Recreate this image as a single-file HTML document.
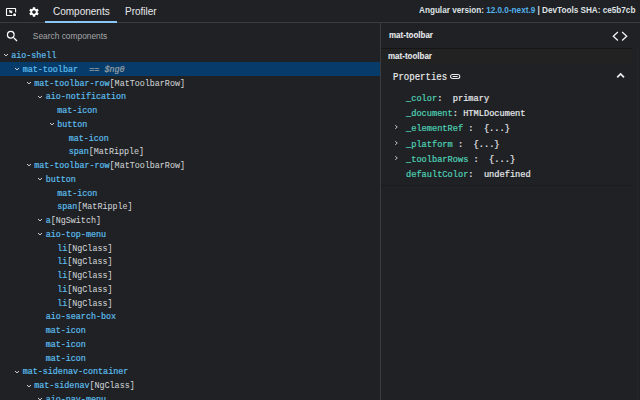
<!DOCTYPE html>
<html><head><meta charset="utf-8">
<style>
*{margin:0;padding:0;box-sizing:border-box}
html,body{width:640px;height:400px;overflow:hidden;background:#202124;font-family:"Liberation Sans",sans-serif}
.topbar{position:absolute;left:0;top:0;width:640px;height:23px;background:#202124;border-bottom:1px solid #3a3b3e}
.tab{position:absolute;top:5.5px;font-size:10px;color:#e8eaed;line-height:12px;white-space:pre}
.uline{position:absolute;left:45px;top:20.5px;width:72px;height:2px;background:#8cc6f2}
.ver{position:absolute;left:419.4px;top:5.3px;font-size:9.2px;font-weight:700;color:#dfe1e4;white-space:pre;line-height:11px;transform:scaleX(0.889);transform-origin:0 0}
.ver b{color:#52b0ea;font-weight:700}
.search{position:absolute;left:0;top:23px;width:380px;height:24px}
.ph{position:absolute;left:32.8px;top:7.9px;font-size:8.4px;color:#a4a6a9;line-height:10px;white-space:pre}
.left{position:absolute;left:0;top:23px;width:380px;height:377px;background:#202124}
.divider{position:absolute;left:380px;top:23px;width:1px;height:377px;background:#3a3b3e}
.sel{position:absolute;left:0;width:380px;height:14px;background:#073c6a}
.row{position:absolute;left:0;width:380px;height:13.72px;font-family:"Liberation Mono",monospace;font-size:8.4px;line-height:13.72px;white-space:pre;-webkit-text-stroke:0.2px currentColor}
.arr{position:absolute;top:5px;line-height:0}
.nm{position:absolute;top:1.7px}
.el{color:#5cbdec}
.dir{color:#cfd2d6;-webkit-text-stroke:0.05px currentColor}
.ng{color:#9aa0a6;font-style:italic;margin-left:1.3px}
.rhead{position:absolute;left:381px;top:23px;width:259px;height:25px;background:#202124}
.rhead .t{position:absolute;left:7.5px;top:6.9px;font-size:9.3px;font-weight:700;color:#e8eaed;line-height:10px;transform:scaleX(0.86);transform-origin:0 0;white-space:pre;-webkit-text-stroke:0.08px currentColor}
.card{position:absolute;left:381px;top:49px;width:251px;height:136px;background:linear-gradient(#222222 0px,#222222 13px,#202124 18px);box-shadow:0 -1px 0 #161617,0 1px 0 #1a1b1e}
.card .t{position:absolute;left:7px;top:2.4px;font-size:9.3px;font-weight:700;color:#e8eaed;line-height:10px;transform:scaleX(0.86);transform-origin:0 0;white-space:pre;-webkit-text-stroke:0.08px currentColor}
.props{position:absolute;left:12px;top:20px;font-family:"Liberation Mono",monospace;font-size:9px;color:#e8eaed;line-height:12px}
.prow{position:absolute;left:0;font-family:"Liberation Mono",monospace;font-size:8.67px;line-height:13px;white-space:pre;-webkit-text-stroke:0.2px currentColor}
.k{color:#4fd0b6}
.v{color:#e8eaed}
</style></head><body>
<div class="topbar">
  <svg style="position:absolute;left:5px;top:7px" width="13" height="11" viewBox="0 0 13 11"><rect x="1.5" y="1.5" width="9.1" height="7" rx="0.5" fill="none" stroke="#fff" stroke-width="1.1"/><circle cx="9.6" cy="7.7" r="2.4" fill="#000"/><circle cx="9.6" cy="7.7" r="1.55" fill="#fff"/><path d="M3.9 3.1 L7.8 3.9 L6.6 4.7 L7.6 5.8 L6.7 6.5 L5.7 5.4 L4.8 6.3 Z" fill="#fff"/></svg>
  <svg style="position:absolute;left:28px;top:6px" width="12" height="12" viewBox="0 0 24 24"><path fill="#fff" d="M19.14 12.94c.04-.3.06-.61.06-.94 0-.32-.02-.64-.07-.94l2.03-1.58a.49.49 0 0 0 .12-.61l-1.92-3.32a.488.488 0 0 0-.59-.22l-2.39.96c-.5-.38-1.03-.7-1.62-.94l-.36-2.54a.484.484 0 0 0-.48-.41h-3.84c-.24 0-.43.17-.47.41l-.36 2.540c-.59.24-1.13.57-1.62.94l-2.39-.96c-.22-.08-.47 0-.59.22L2.74 8.87c-.12.21-.08.47.12.61l2.03 1.58c-.05.3-.09.63-.09.94s.02.64.07.94l-2.03 1.58a.49.49 0 0 0-.12.61l1.92 3.32c.12.22.37.29.59.22l2.39-.96c.5.38 1.03.7 1.62.94l.36 2.54c.05.24.24.41.48.41h3.840c.24 0 .44-.17.47-.41l.36-2.54c.59-.24 1.13-.56 1.62-.94l2.39.96c.22.08.47 0 .59-.22l1.92-3.32c.12-.22.07-.47-.12-.61l-2.01-1.58zM12 15.6c-1.98 0-3.6-1.62-3.6-3.6s1.62-3.6 3.6-3.6 3.6 1.62 3.6 3.6-1.62 3.6-3.6 3.6z"/></svg>
  <div class="tab" style="left:53px">Components</div>
  <div class="tab" style="left:125px">Profiler</div>
  <div class="uline"></div>
  <div class="ver">Angular version: <b>12.0.0-next.9</b> | DevTools SHA: ce5b7cb</div>
</div>
<div class="left"></div>
<div class="search">
  <svg style="position:absolute;left:5.3px;top:6.2px" width="14.6" height="14.6" viewBox="0 0 24 24"><path fill="#fff" d="M15.5 14h-.79l-.28-.27A6.471 6.471 0 0 0 16 9.5 6.5 6.5 0 1 0 9.5 16c1.61 0 3.09-.59 4.23-1.57l.27.28v.79l5 4.99L20.49 19l-4.99-5zm-6 0C7.01 14 5 11.99 5 9.5S7.01 5 9.5 5 14 7.01 14 9.5 11.99 14 9.5 14z"/></svg>
  <div class="ph">Search components</div>
</div>
<div class="row" style="top:48.30px"><span class="arr" style="left:2.90px"><svg class="chev" width="6" height="4" viewBox="0 0 6 4"><path d="M1 1 L3 2.9 L5 1" fill="none" stroke="#d0d2d5" stroke-width="1"/></svg></span><span class="nm" style="left:11.20px"><span class="el">aio-shell</span></span></div>
<div class="sel" style="top:62.06px"></div><div class="row" style="top:62.06px"><span class="arr" style="left:14.40px"><svg class="chev" width="6" height="4" viewBox="0 0 6 4"><path d="M1 1 L3 2.9 L5 1" fill="none" stroke="#d0d2d5" stroke-width="1"/></svg></span><span class="nm" style="left:22.70px"><span class="el">mat-toolbar</span><span class="ng">&nbsp;&nbsp;== $ng0</span></span></div>
<div class="row" style="top:75.82px"><span class="arr" style="left:25.90px"><svg class="chev" width="6" height="4" viewBox="0 0 6 4"><path d="M1 1 L3 2.9 L5 1" fill="none" stroke="#d0d2d5" stroke-width="1"/></svg></span><span class="nm" style="left:34.20px"><span class="el">mat-toolbar-row</span><span class="dir">[MatToolbarRow]</span></span></div>
<div class="row" style="top:89.58px"><span class="arr" style="left:37.40px"><svg class="chev" width="6" height="4" viewBox="0 0 6 4"><path d="M1 1 L3 2.9 L5 1" fill="none" stroke="#d0d2d5" stroke-width="1"/></svg></span><span class="nm" style="left:45.70px"><span class="el">aio-notification</span></span></div>
<div class="row" style="top:103.34px"><span class="nm" style="left:57.20px"><span class="el">mat-icon</span></span></div>
<div class="row" style="top:117.10px"><span class="arr" style="left:48.90px"><svg class="chev" width="6" height="4" viewBox="0 0 6 4"><path d="M1 1 L3 2.9 L5 1" fill="none" stroke="#d0d2d5" stroke-width="1"/></svg></span><span class="nm" style="left:57.20px"><span class="el">button</span></span></div>
<div class="row" style="top:130.86px"><span class="nm" style="left:68.70px"><span class="el">mat-icon</span></span></div>
<div class="row" style="top:144.62px"><span class="nm" style="left:68.70px"><span class="el">span</span><span class="dir">[MatRipple]</span></span></div>
<div class="row" style="top:158.38px"><span class="arr" style="left:25.90px"><svg class="chev" width="6" height="4" viewBox="0 0 6 4"><path d="M1 1 L3 2.9 L5 1" fill="none" stroke="#d0d2d5" stroke-width="1"/></svg></span><span class="nm" style="left:34.20px"><span class="el">mat-toolbar-row</span><span class="dir">[MatToolbarRow]</span></span></div>
<div class="row" style="top:172.14px"><span class="arr" style="left:37.40px"><svg class="chev" width="6" height="4" viewBox="0 0 6 4"><path d="M1 1 L3 2.9 L5 1" fill="none" stroke="#d0d2d5" stroke-width="1"/></svg></span><span class="nm" style="left:45.70px"><span class="el">button</span></span></div>
<div class="row" style="top:185.90px"><span class="nm" style="left:57.20px"><span class="el">mat-icon</span></span></div>
<div class="row" style="top:199.66px"><span class="nm" style="left:57.20px"><span class="el">span</span><span class="dir">[MatRipple]</span></span></div>
<div class="row" style="top:213.42px"><span class="arr" style="left:37.40px"><svg class="chev" width="6" height="4" viewBox="0 0 6 4"><path d="M1 1 L3 2.9 L5 1" fill="none" stroke="#d0d2d5" stroke-width="1"/></svg></span><span class="nm" style="left:45.70px"><span class="el">a</span><span class="dir">[NgSwitch]</span></span></div>
<div class="row" style="top:227.18px"><span class="arr" style="left:37.40px"><svg class="chev" width="6" height="4" viewBox="0 0 6 4"><path d="M1 1 L3 2.9 L5 1" fill="none" stroke="#d0d2d5" stroke-width="1"/></svg></span><span class="nm" style="left:45.70px"><span class="el">aio-top-menu</span></span></div>
<div class="row" style="top:240.94px"><span class="nm" style="left:57.20px"><span class="el">li</span><span class="dir">[NgClass]</span></span></div>
<div class="row" style="top:254.70px"><span class="nm" style="left:57.20px"><span class="el">li</span><span class="dir">[NgClass]</span></span></div>
<div class="row" style="top:268.46px"><span class="nm" style="left:57.20px"><span class="el">li</span><span class="dir">[NgClass]</span></span></div>
<div class="row" style="top:282.22px"><span class="nm" style="left:57.20px"><span class="el">li</span><span class="dir">[NgClass]</span></span></div>
<div class="row" style="top:295.98px"><span class="nm" style="left:57.20px"><span class="el">li</span><span class="dir">[NgClass]</span></span></div>
<div class="row" style="top:309.74px"><span class="nm" style="left:45.70px"><span class="el">aio-search-box</span></span></div>
<div class="row" style="top:323.50px"><span class="nm" style="left:45.70px"><span class="el">mat-icon</span></span></div>
<div class="row" style="top:337.26px"><span class="nm" style="left:45.70px"><span class="el">mat-icon</span></span></div>
<div class="row" style="top:351.02px"><span class="nm" style="left:45.70px"><span class="el">mat-icon</span></span></div>
<div class="row" style="top:364.78px"><span class="arr" style="left:14.40px"><svg class="chev" width="6" height="4" viewBox="0 0 6 4"><path d="M1 1 L3 2.9 L5 1" fill="none" stroke="#d0d2d5" stroke-width="1"/></svg></span><span class="nm" style="left:22.70px"><span class="el">mat-sidenav-container</span></span></div>
<div class="row" style="top:378.54px"><span class="arr" style="left:25.90px"><svg class="chev" width="6" height="4" viewBox="0 0 6 4"><path d="M1 1 L3 2.9 L5 1" fill="none" stroke="#d0d2d5" stroke-width="1"/></svg></span><span class="nm" style="left:34.20px"><span class="el">mat-sidenav</span><span class="dir">[NgClass]</span></span></div>
<div class="row" style="top:392.30px"><span class="arr" style="left:37.40px"><svg class="chev" width="6" height="4" viewBox="0 0 6 4"><path d="M1 1 L3 2.9 L5 1" fill="none" stroke="#d0d2d5" stroke-width="1"/></svg></span><span class="nm" style="left:45.70px"><span class="el">aio-nav-menu</span></span></div>
<div class="divider"></div>
<div style="position:absolute;left:637px;top:48px;width:1px;height:352px;background:#25262a"></div>
<div class="rhead"><div class="t">mat-toolbar</div>
  <svg style="position:absolute;left:231px;top:8px" width="16" height="11" viewBox="0 0 16 11"><path d="M5.9 1.1 L1.3 5.3 L5.9 9.5 M10.1 1.1 L14.7 5.3 L10.1 9.5" fill="none" stroke="#f2f3f4" stroke-width="1.3"/></svg>
</div>
<div class="card"><div class="t">mat-toolbar</div>
  <div style="position:absolute;left:11.5px;top:21.6px;font-family:'Liberation Mono',monospace;font-size:10.5px;color:#eceef0;line-height:12px;transform:scaleX(0.86);transform-origin:0 0;-webkit-text-stroke:0.15px #eceef0">Properties</div>
  <svg style="position:absolute;left:67px;top:23px" width="14" height="9" viewBox="0 0 14 9"><rect x="2.5" y="2.5" width="9.3" height="4" rx="2" fill="none" stroke="#e8eaed" stroke-width="1.05"/><path d="M4.6 4.5 H9.7" stroke="#e8eaed" stroke-width="1"/></svg>
  <svg style="position:absolute;left:234.6px;top:23.2px" width="10" height="7" viewBox="0 0 10 7"><path d="M1.2 5.3 L4.6 1.9 L8 5.3" fill="none" stroke="#f0f0f0" stroke-width="1.7"/></svg>
<div class="prow" style="left:25px;top:43.90px"><span class="k">_color</span><span class="v">:  primary</span></div>
<div class="prow" style="left:25px;top:59.10px"><span class="k">_document</span><span class="v">: HTMLDocument</span></div>
<div style="position:absolute;left:13px;top:75.30px;line-height:0"><svg width="5" height="6" viewBox="0 0 5 6"><path d="M1.2 1.2 L3.3 3 L1.2 4.8" fill="none" stroke="#c4c6c9" stroke-width="0.95"/></svg></div>
<div class="prow" style="left:25px;top:74.30px"><span class="k">_elementRef</span><span class="v"> :  {...}</span></div>
<div style="position:absolute;left:13px;top:90.50px;line-height:0"><svg width="5" height="6" viewBox="0 0 5 6"><path d="M1.2 1.2 L3.3 3 L1.2 4.8" fill="none" stroke="#c4c6c9" stroke-width="0.95"/></svg></div>
<div class="prow" style="left:25px;top:89.50px"><span class="k">_platform</span><span class="v"> :  {...}</span></div>
<div style="position:absolute;left:13px;top:105.70px;line-height:0"><svg width="5" height="6" viewBox="0 0 5 6"><path d="M1.2 1.2 L3.3 3 L1.2 4.8" fill="none" stroke="#c4c6c9" stroke-width="0.95"/></svg></div>
<div class="prow" style="left:25px;top:104.70px"><span class="k">_toolbarRows</span><span class="v"> :  {...}</span></div>
<div class="prow" style="left:25px;top:119.90px"><span class="k">defaultColor</span><span class="v">:  undefined</span></div>
</div>
</body></html>
